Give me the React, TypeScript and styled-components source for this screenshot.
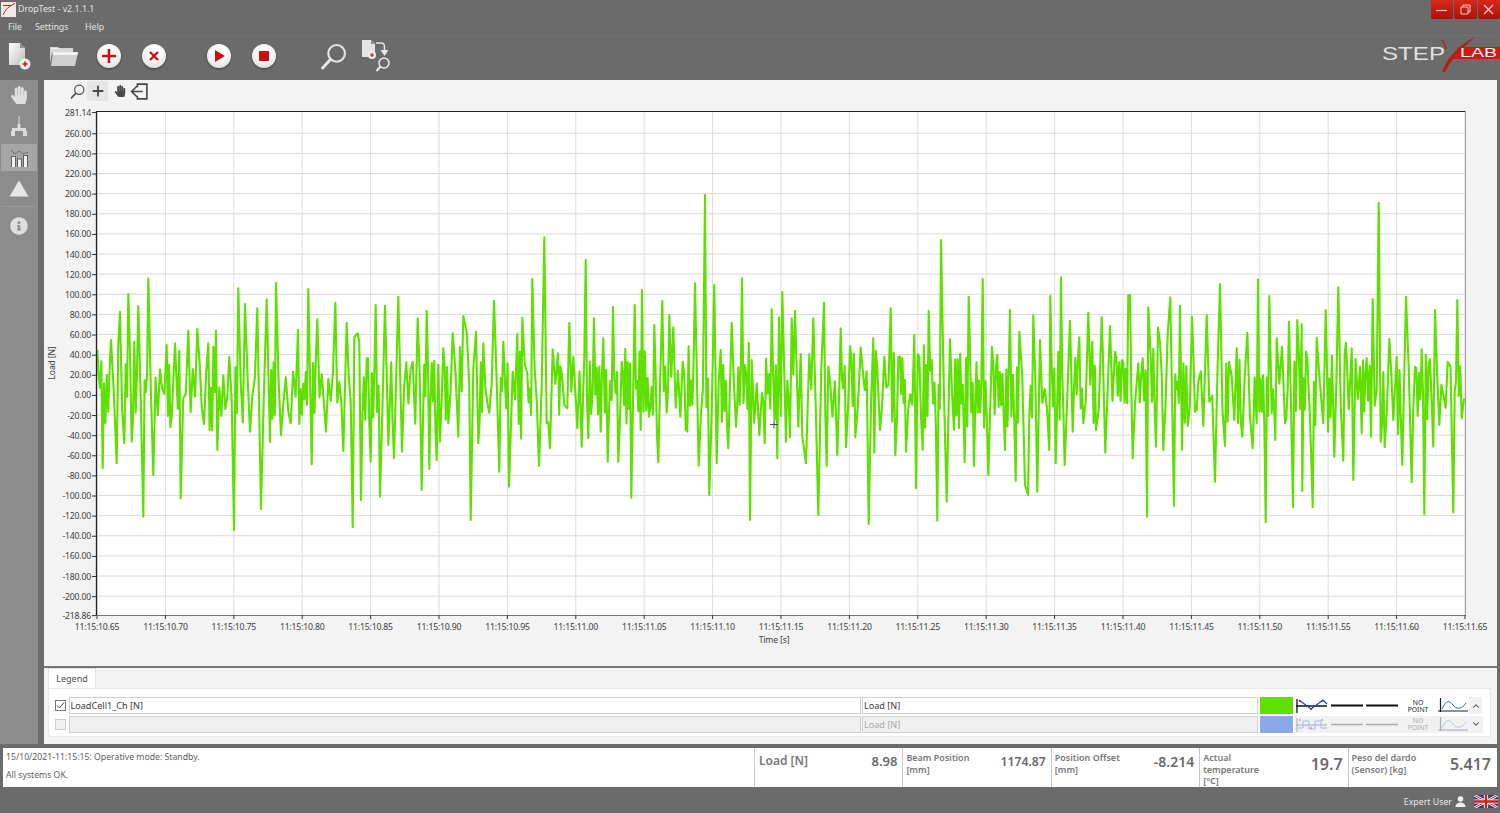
import React, { useMemo } from "react";
import styled, { createGlobalStyle } from "styled-components";
import { FaHandPaper, FaInfoCircle } from "react-icons/fa";
import { Plus, ChevronUp, ChevronDown } from "lucide-react";

const FONT = `"Noto Sans", "Open Sans", "Liberation Sans", sans-serif`;

const Global = createGlobalStyle`
  html, body { margin: 0; padding: 0; background: #6b6b6b; overflow: hidden; }
  * { box-sizing: border-box; }
`;

const Page = styled.div`
  width: 1500px; height: 813px; display: flex; flex-direction: column;
  background: #6b6b6b; font-family: ${FONT}; color: #555; overflow: hidden;
`;
const TitleRow = styled.div`
  height: 18px; display: flex; align-items: center; padding-left: 1px; gap: 2px;
  color: #e4e4e4; font-size: 8.8px;
`;
const AppIcon = styled.svg`width: 15px; height: 15px; flex: none;`;
const WindowButtons = styled.div`
  margin-left: auto; display: flex; gap: 1px; height: 19px; align-self: flex-start;
`;
const WinBtn = styled.div`
  width: 22.5px; height: 19px; display: flex; align-items: center; justify-content: center;
  background: linear-gradient(#d9291a, #a8120a); border-radius: 0 0 2px 2px;
`;
const MenuRow = styled.div`
  height: 18px; display: flex; align-items: center; padding-left: 8px; color: #e4e4e4; font-size: 8.8px;
  border-bottom: 1px solid #727272;
`;
const MenuItem = styled.span<{ $w: number }>`width: ${(p) => p.$w}px;`;
const Toolbar = styled.div`height: 44px; display: flex; align-items: center; padding-bottom: 4px;`;
const ToolGroup = styled.div<{ $gap: number; $left: number }>`
  display: flex; align-items: center; gap: ${(p) => p.$gap}px; margin-left: ${(p) => p.$left}px;
`;
const ToolButton = styled.div`
  width: 38px; height: 38px; display: flex; align-items: center; justify-content: center;
`;
const RoundButton = styled.div`
  width: 24px; height: 24px; border-radius: 50%; display: flex; align-items: center; justify-content: center;
  background: radial-gradient(circle at 50% 35%, #ffffff 30%, #d4d4d4 100%);
  box-shadow: 0 1px 2px rgba(0,0,0,.45);
`;
const Logo = styled.svg`margin-left: auto; width: 120px; height: 40px; flex: none;`;
const LogoText = styled.text`font-family: "Liberation Sans", sans-serif;`;

const Body = styled.div`height: 664px; display: flex;`;
const Sidebar = styled.div`
  width: 38px; flex: none; background: #8c8c8c; display: flex; flex-direction: column; gap: 2px; align-items: stretch;
`;
const SideItem = styled.div<{ $active?: boolean; $h: number }>`
  height: ${(p) => p.$h}px; margin: 0 1px; display: flex; align-items: center; justify-content: center;
  background: ${(p) => (p.$active ? "#a6a6a6" : "transparent")};
`;
const SideRule = styled.div`height: 1px; margin: 0 2px; background: #9a9a9a;`;
const Main = styled.div`
  margin-left: 6px; width: 1453px; display: flex; flex-direction: column; background: #f3f3f3;
`;
const ChartPanel = styled.div`
  height: 588px; display: flex; flex-direction: column; border-bottom: 2px solid #757575; flex: none;
`;
const ChartTools = styled.div`
  height: 22px; display: flex; align-items: center; padding-left: 23px; flex: none;
`;
const ChartTool = styled.div<{ $active?: boolean; $w: number }>`
  width: ${(p) => p.$w}px; height: 20px; display: flex; align-items: center; justify-content: center;
  background: ${(p) => (p.$active ? "#e6e6e6" : "transparent")};
  color: #4a4a4a;
`;
const ChartSvg = styled.svg`display: block; flex: none;`;
const AxisLabel = styled.text`font-family: ${FONT}; font-size: 8.7px; letter-spacing: -0.2px; fill: #3c3c3c;`;

const LegendPanel = styled.div`flex: 1; min-height: 0; padding: 0 6px 7px 4px; display: flex; flex-direction: column;`;
const Tab = styled.div`
  width: 48px; height: 20px; background: #fff; border: 1px solid #e2e2e2; border-bottom: none; flex: none;
  display: flex; align-items: center; justify-content: center; font-size: 9px; color: #4a4a4a;
`;
const LegendBox = styled.div`
  flex: 1; background: #fff; border: 1px solid #e8e8e8; padding: 8px 7px 0 6px;
  display: flex; flex-direction: column; gap: 1px;
`;
const LegendRow = styled.div`
  height: 17.5px; display: grid; align-items: center;
  grid-template-columns: 12px 792px 396px 33px 1fr;
  column-gap: 1.5px;
`;
const Check = styled.div<{ $off?: boolean }>`
  width: 11px; height: 11px; border: 1px solid ${(p) => (p.$off ? "#cfcfcf" : "#777")};
  background: ${(p) => (p.$off ? "#f0f0f0" : "#fff")}; display: flex; align-items: center; justify-content: center;
`;
const LegendInput = styled.div<{ $off?: boolean }>`
  height: 17px; border: 1px solid #d0d0d0; padding-left: 1px; display: flex; align-items: center;
  font-size: 9.1px; color: ${(p) => (p.$off ? "#aaa" : "#3c3c3c")};
  background: ${(p) => (p.$off ? "#f0f0f0" : "#fff")};
`;
const Swatch = styled.div<{ $color: string }>`height: 17px; background: ${(p) => p.$color};`;
const TraceCell = styled.div<{ $off?: boolean }>`
  height: 17px; display: flex; align-items: center; padding-left: 2px; background: ${(p) => (p.$off ? "#f1f1f1" : "#fff")};
`;
const NoPoint = styled.div<{ $off?: boolean }>`
  width: 24px; margin-left: 8px; text-align: center; font-size: 6.8px; line-height: 7.2px;
  color: ${(p) => (p.$off ? "#aaa" : "#222")};
`;
const Scroller = styled.div`
  width: 13px; height: 17px; background: #f1f1f1; display: flex; align-items: center; justify-content: center; color: #444;
`;

const Status = styled.div`
  margin: 4px 3px 0; height: 39px; background: #fff; display: flex; flex: none;
`;
const Message = styled.div`
  width: 751px; padding: 4px 0 0 3px; font-size: 8.7px; color: #606060; display: flex; flex-direction: column; gap: 7px; line-height: 11px;
`;
const Reading = styled.div`
  width: 148.4px; flex: none; border-left: 1px solid #c8c8c8; padding: 4px 5px 0 3px; display: flex; justify-content: space-between;
`;
const ReadingLabel = styled.div<{ $big?: boolean }>`
  font-size: ${(p) => (p.$big ? 12 : 9)}px; line-height: ${(p) => (p.$big ? 17 : 11.500)}px; font-weight: 600; color: #777;
  padding-left: ${(p) => (p.$big ? 1 : 0)}px;
`;
const ReadingValue = styled.div<{ $size: number }>`
  font-size: ${(p) => p.$size}px; line-height: ${(p) => (p.$size > 15 ? 24 : 19)}px; font-weight: 600; color: #6a6a6a;
`;
const BottomBar = styled.div`
  flex: 1; display: flex; justify-content: flex-end; align-items: center; gap: 8px; padding: 3px 2px 0 0;
  font-size: 8.8px; color: #e8e8e8;
`;
const UserBlock = styled.div`display: flex; align-items: center; gap: 3px;`;

/* --------- waveform data, transcribed spike by spike --------- */
const SEGS: { ox: number; oy: number; p: number[] }[] = [
  { ox: 90, oy: 280, p: [22,210,38,565,42,310,63,180,80,550,90,95,103,490,115,42,125,485,145,78,160,710,175,-5,190,585,230,195,245,410,255,190,272,655,295,152,322,146,342,432,355,190,378,152,382,510,418,230,432,750,445,25,465,72,480,455,502,85,513,687,530,58,540,485,558,8,573,465,602,430,624,150,628,432,655,27,665,553,682,118,708,455,736,68,760,513,770,128,788,742,793,172,803,160,813,660,830,235,842,545,857,75,870,650,885,77,895,495,912,535,925,50,936,515,968,245,983,115,995,630,1010,92,1018,567,1040,540] },
  { ox: 440, oy: 230, p: [0,635,10,355,25,580,38,310,55,620,60,350,70,258,80,305,92,870,108,305,115,640,130,340,148,548,162,212,178,725,190,335,207,770,218,425,232,312,236,582,247,263,262,430,277,147,297,708,313,22,320,580,330,655,338,358,354,370,365,430,382,535,388,278,400,380,412,595,425,650,437,90,445,625,462,265,490,325,503,695,519,230,535,695,545,395,574,803,584,225,602,600,606,180,627,560,643,285,655,697,667,213,680,548,688,255,700,292,728,395,742,605,765,160,776,707,795,-105,808,795,823,165,830,700,842,360,865,655,875,278,888,590,906,145,915,405,930,870,935,390,958,615,974,640,995,238,1012,685,1017,262,1027,186,1038,635] },
  { ox: 790, oy: 230, p: [0,622,5,265,15,242,25,590,32,372,37,620,48,700,58,372,70,265,85,855,102,218,110,708,120,450,142,675,152,295,168,652,180,348,196,622,212,352,236,882,250,325,253,668,262,415,270,600,302,235,316,675,330,380,348,665,373,315,378,775,388,380,398,660,416,242,425,390,442,872,453,30,470,815,480,327,492,600,518,465,524,697,536,200,552,708,578,147,595,735,606,350,622,375,645,660,660,240,677,752,688,305,705,765,714,795,730,255,742,785,750,330,778,660,781,198,797,700,813,142,824,705,840,272,848,605,868,322,880,580,895,248,907,335,918,600,935,262,946,668,960,288,975,365,1000,395,1015,195] },
  { ox: 1130, oy: 190, p: [0,315,8,805,15,640,25,520,38,505,51,980,55,352,62,500,78,770,84,412,90,458,100,780,113,432,121,322,132,948,150,347,156,780,173,708,186,380,195,665,205,575,220,708,230,375,238,635,255,875,270,283,285,768,297,515,313,690,320,475,337,740,352,428,368,775,380,700,384,268,407,997,418,318,436,750,440,445,456,470,465,700,477,395,489,952,502,390,515,403,517,903,532,505,548,952,560,443,580,700,587,360,613,800,625,292,640,812,648,458,665,475,670,870,690,530,695,730,710,505,723,740,728,327,746,38,752,755,764,772,778,447,790,690,800,500,817,825,828,320,845,877,855,530,883,973,900,508,910,770,915,360,928,705,953,515,970,967,982,330,995,685,1002,625] },
];

function buildWave(): string {
  let seed = 20211015;
  const rnd = () => {
    seed = (seed + 0x6d2b79f5) | 0;
    let t = Math.imul(seed ^ (seed >>> 15), 1 | seed);
    t = (t + Math.imul(t ^ (t >>> 7), 61 | t)) ^ t;
    return ((t ^ (t >>> 14)) >>> 0) / 4294967296;
  };
  const anchors: [number, number][] = [];
  SEGS.forEach((s) => {
    const list: [number, number][] = [];
    for (let i = 0; i < s.p.length; i += 2) list.push([s.ox + s.p[i] / 3, s.oy + s.p[i + 1] / 3]);
    list.sort((a, b) => a[0] - b[0]);
    anchors.push(...list);
  });
  const out: [number, number][] = [];
  let sign = 1;
  anchors.forEach((a, i) => {
    out.push(a);
    const b = anchors[i + 1];
    if (!b) return;
    const dx = b[0] - a[0];
    const dense = rnd() < 0.55;
    const n = Math.floor(dx / (dense ? 1.2 : 2));
    for (let k = 1; k < n; k++) {
      sign = -sign;
      const amp = dense ? 6 + rnd() * 32 : 2 + rnd() * 22;
      const centre = 390 + (rnd() - 0.5) * 24;
      out.push([a[0] + (dx * k) / n, centre + sign * amp]);
    }
  });
  return out.map((p, i) => `${i ? "L" : "M"}${p[0].toFixed(1)} ${p[1].toFixed(1)}`).join("");
}

const PLOT = { l: 97, r: 1465, t: 112, b: 615 };
const yOf = (v: number) => 394.9 - v * 1.0062;
const yTicks = Array.from({ length: 24 }, (_, i) => 260 - i * 20);
const xTicks = Array.from({ length: 21 }, (_, i) => i);
const timeLabel = (i: number) => {
  const h = 65 + i * 5;
  const sec = h >= 100 ? 11 : 10;
  const frac = h % 100;
  return `11:15:${sec}.${String(frac).padStart(2, "0")}`;
};

function Chart() {
  const wave = useMemo(buildWave, []);
  return (
    <ChartSvg width={1453} height={562} viewBox="44 102 1453 562">
      <rect x={PLOT.l} y={PLOT.t} width={PLOT.r - PLOT.l} height={PLOT.b - PLOT.t} fill="#fff" />
      {yTicks.map((v) => (
        <line key={v} x1={PLOT.l} x2={PLOT.r} y1={yOf(v)} y2={yOf(v)} stroke="#d9d9d9" strokeWidth="1" />
      ))}
      {xTicks.map((i) => (
        <line key={i} x1={PLOT.l + i * 68.4} x2={PLOT.l + i * 68.4} y1={PLOT.t} y2={PLOT.b} stroke="#dcdcdc" strokeWidth="1" />
      ))}
      <path d={wave} fill="none" stroke="#5fe000" strokeWidth="2.100" strokeLinejoin="round" />
      <path d="M770 424.500H778M774 420.500V428.500" stroke="#444" strokeWidth="1" />
      <line x1={96} x2={1466} y1={111.5} y2={111.5} stroke="#222" />
      <line x1={96.5} x2={96.5} y1={111} y2={615} stroke="#222" strokeWidth="1.3" />
      <line x1={96} x2={1466} y1={615.5} y2={615.5} stroke="#777" />
      <line x1={1465.5} x2={1465.5} y1={111} y2={616} stroke="#999" />
      {[281.14, ...yTicks, -218.86].map((v) => (
        <g key={v}>
          <line x1={92} x2={96} y1={yOf(v) + 0.5} y2={yOf(v) + 0.5} stroke="#333" />
          <AxisLabel x={91} y={yOf(v) + 3.5} textAnchor="end">{v.toFixed(2)}</AxisLabel>
        </g>
      ))}
      {xTicks.map((i) => (
        <g key={i}>
          <line x1={PLOT.l + i * 68.4} x2={PLOT.l + i * 68.4} y1={615} y2={619} stroke="#333" />
          <AxisLabel x={PLOT.l + i * 68.4} y={630} textAnchor="middle">{timeLabel(i)}</AxisLabel>
        </g>
      ))}
      <AxisLabel x={774} y={643} textAnchor="middle">Time [s]</AxisLabel>
      <AxisLabel transform="translate(55 363) rotate(-90)" textAnchor="middle">Load [N]</AxisLabel>
    </ChartSvg>
  );
}

/* --------- icons --------- */
const NewDocIcon = () => (
  <svg width="30" height="30" viewBox="0 0 30 30">
    <defs>
      <linearGradient id="pg" x1="0" y1="0" x2="1" y2="1"><stop offset="0" stopColor="#fff" /><stop offset="1" stopColor="#bdbdbd" /></linearGradient>
    </defs>
    <path d="M5 2h11l5 5v17H5z" fill="url(#pg)" />
    <path d="M16 2v5h5z" fill="#8f8f8f" />
    <circle cx="21" cy="23" r="5.500" fill="#eee" />
    <path d="M18.500 23h5M21 20.500v5" stroke="#c81010" strokeWidth="1.600" />
  </svg>
);
const FolderIcon = () => (
  <svg width="30" height="26" viewBox="0 0 30 26" style={{ marginLeft: -2 }}>
    <path d="M2 4h8l2 2h13v4H4l-2 10z" fill="#d8d8d8" />
    <path d="M4 5.500h21" stroke="#fff" strokeWidth="1" opacity=".7" />
    <path d="M3 23L5 9h25l-3 14z" fill="#cfcfcf" />
    <path d="M5 9h25l-.6 3H4.600z" fill="#f1f1f1" />
  </svg>
);
const Magnifier = ({ s, c, w }: { s: number; c: string; w: number }) => (
  <svg width={s} height={s} viewBox="0 0 26 26">
    <circle cx="16" cy="10" r="8" fill="none" stroke={c} strokeWidth={w} />
    <path d="M10 16L2.500 24" stroke={c} strokeWidth={w + 0.8} strokeLinecap="round" />
  </svg>
);
const DocSearchIcon = () => (
  <svg width="34" height="34" viewBox="0 0 34 34">
    <path d="M3 1h9l4 4v13H3z" fill="#e4e4e4" />
    <path d="M12 1v4h4z" fill="#8f8f8f" />
    <circle cx="13" cy="16" r="4" fill="#eee" />
    <path d="M11 16h4M13 14v4" stroke="#c81010" strokeWidth="1.200" />
    <path d="M17 4h5c3 0 3.500 2 3.500 4v4" fill="none" stroke="#e8e8e8" strokeWidth="1.500" />
    <path d="M21.500 11h8l-4 6z" fill="#e8e8e8" />
    <circle cx="25" cy="24" r="5" fill="none" stroke="#eee" strokeWidth="1.500" />
    <path d="M21.500 27.500L17.500 32" stroke="#eee" strokeWidth="2" />
  </svg>
);
const HandIcon = () => <FaHandPaper size={18} color="#dedede" />;
const NetworkIcon = () => (
  <svg width="20" height="24" viewBox="0 0 20 24">
    <path d="M9.500 1h1v9h-1z" fill="#ddd" />
    <path d="M8.500 9h3v4h-3z" fill="#dcdcdc" />
    <path d="M3 13h14v3H3z" fill="#dcdcdc" />
    <path d="M2 16h4v5H2zM14 16h4v5h-4z" fill="#dcdcdc" />
  </svg>
);
const BarsIcon = () => (
  <svg width="19" height="18" viewBox="0 0 19 18">
    <path d="M1 7h5v11H1zM7 9.500h5V18H7zM13 6h5v12h-5z" fill="#5e5e5e" />
    <path d="M2 8h3v10H2zM8 10.500h3V18H8zM14 7h3v11h-3z" fill="#f2f2f2" />
    <path d="M1 1.500l4 3.500 4-3 4 3 5-2" fill="none" stroke="#4a4a4a" strokeWidth=".9" strokeDasharray="1.600 .8" />
  </svg>
);
const WarnIcon = () => (
  <svg width="20" height="17" viewBox="0 0 20 17"><path d="M10 .5l9.500 16H.5z" fill="#e6e6e6" /></svg>
);
const ExitIcon = () => (
  <svg width="19" height="19" viewBox="0 0 18 18" style={{ flex: "none" }}>
    <path d="M7 5V2h9v14H7v-3" fill="none" stroke="#444" strokeWidth="1.500" />
    <path d="M12 9H2M6.500 4L1.500 9l5 5" fill="none" stroke="#444" strokeWidth="1.500" />
  </svg>
);
const UserIcon = () => (
  <svg width="11" height="11" viewBox="0 0 11 11">
    <circle cx="5.500" cy="3" r="2.800" fill="#eee" />
    <path d="M.5 11c0-3 2-4.500 5-4.500s5 1.500 5 4.500z" fill="#eee" />
  </svg>
);
const Flag = () => (
  <svg width="24" height="13" viewBox="0 0 24 13">
    <rect width="24" height="13" fill="#2a3f8f" />
    <path d="M0 0l24 13M24 0L0 13" stroke="#fff" strokeWidth="2.600" />
    <path d="M0 0l24 13M24 0L0 13" stroke="#d01c1c" strokeWidth="1" />
    <path d="M12 0v13M0 6.500h24" stroke="#fff" strokeWidth="4.200" />
    <path d="M12 0v13M0 6.500h24" stroke="#d01c1c" strokeWidth="2.400" />
  </svg>
);
const Interp = ({ c, alt }: { c: string; alt?: boolean }) => (
  <svg width="32" height="17" viewBox="0 0 32 17">
    <path d="M1 2v14M0 9h31" stroke={alt ? "#aaa" : "#111"} strokeWidth={alt ? 1 : 1.300} fill="none" />
    {alt ? (
      <path d="M2 12h5V5h6v8h6V5h6v7h6" stroke="#a9b9e8" strokeWidth="1" fill="none" />
    ) : (
      <path d="M3 3l12 9 12-9 4 4" stroke={c} strokeWidth="1.200" fill="none" />
    )}
    <circle cx="4" cy="4" r="1" fill={alt ? "#c79ab0" : "#b0104a"} />
    <circle cx="15" cy="12" r="1" fill={alt ? "#c79ab0" : "#b0104a"} />
    <circle cx="26" cy="4" r="1" fill={alt ? "#c79ab0" : "#2840b0"} />
  </svg>
);
const LineSample = ({ c, w, ml }: { c: string; w: number; ml: number }) => (
  <svg width="32" height="5" viewBox="0 0 32 5" style={{ marginLeft: ml }}>
    <rect y={(5 - w) / 2} width="32" height={w} fill={c} />
  </svg>
);
const MiniChart = ({ alt }: { alt?: boolean }) => (
  <svg width="31" height="15" viewBox="0 0 31 15" style={{ marginLeft: 8 }}>
    <path d="M2.500 0v14M0 13h30" stroke={alt ? "#aaa" : "#222"} strokeWidth="1.200" fill="none" />
    <path d="M4 11C8 2 11 2 15 7s9 4 13-2" stroke={alt ? "#b9c5ea" : "#3860c0"} strokeWidth="1" fill="none" />
  </svg>
);

const Row = ({ off, name, unit, color }: { off?: boolean; name: string; unit: string; color: string }) => (
  <LegendRow>
    <Check $off={off}>
      {!off && (
        <svg width="9" height="9" viewBox="0 0 9 9"><path d="M1 4.500l2.500 2.500L8 1.500" fill="none" stroke="#444" strokeWidth="1" /></svg>
      )}
    </Check>
    <LegendInput $off={off}>{name}</LegendInput>
    <LegendInput $off={off}>{unit}</LegendInput>
    <Swatch $color={color} />
    <TraceCell $off={off}>
      <Interp c="#2840b0" alt={off} />
      <LineSample c={off ? "#aaa" : "#111"} w={off ? 1.500 : 2} ml={3} />
      <LineSample c={off ? "#aaa" : "#111"} w={off ? 1.500 : 2} ml={3} />
      <NoPoint $off={off}>NO<br />POINT</NoPoint>
      <MiniChart alt={off} />
      <Scroller>{off ? <ChevronDown size={10} strokeWidth={2.500} /> : <ChevronUp size={10} strokeWidth={2.500} />}</Scroller>
    </TraceCell>
  </LegendRow>
);

export default function App() {
  return (
    <Page>
      <Global />
      <TitleRow>
        <AppIcon viewBox="0 0 15 15">
          <rect width="15" height="15" fill="#f1e9e6" />
          <path d="M2 13C4 8 8 4 14 1.500M2 3.500h8" fill="none" stroke="#c02020" strokeWidth="1" />
        </AppIcon>
        DropTest - v2.1.1.1
        <WindowButtons>
          <WinBtn><svg width="11" height="11" viewBox="0 0 11 11"><path d="M0 6.500h11" stroke="#f3c9c4" strokeWidth="1.200" /></svg></WinBtn>
          <WinBtn><svg width="11" height="11" viewBox="0 0 11 11"><path d="M3 3V1h7v7H8M1 3h7v7H1z" fill="none" stroke="#f3c9c4" /></svg></WinBtn>
          <WinBtn><svg width="11" height="11" viewBox="0 0 11 11"><path d="M1 1l9 9M10 1l-9 9" stroke="#f3d9d6" strokeWidth="1.100" /></svg></WinBtn>
        </WindowButtons>
      </TitleRow>
      <MenuRow>
        <MenuItem $w={27}>File</MenuItem>
        <MenuItem $w={50}>Settings</MenuItem>
        <MenuItem $w={30}>Help</MenuItem>
      </MenuRow>
      <Toolbar>
        <ToolGroup $gap={7} $left={0}>
          <ToolButton><NewDocIcon /></ToolButton>
          <ToolButton><FolderIcon /></ToolButton>
          <ToolButton>
            <RoundButton><svg width="16" height="16" viewBox="0 0 16 16"><path d="M8 1v14M1 8h14" stroke="#cc1010" strokeWidth="2.600" /></svg></RoundButton>
          </ToolButton>
          <ToolButton>
            <RoundButton><svg width="12" height="12" viewBox="0 0 12 12"><path d="M2 2l8 8M10 2l-8 8" stroke="#cc1010" strokeWidth="2.400" /></svg></RoundButton>
          </ToolButton>
        </ToolGroup>
        <ToolGroup $gap={7} $left={27}>
          <ToolButton>
            <RoundButton><svg width="14" height="14" viewBox="0 0 14 14"><path d="M3 1l10 6-10 6z" fill="#cc1010" /></svg></RoundButton>
          </ToolButton>
          <ToolButton>
            <RoundButton><svg width="10" height="10" viewBox="0 0 10 10"><rect width="10" height="10" fill="#cc1010" /></svg></RoundButton>
          </ToolButton>
        </ToolGroup>
        <ToolGroup $gap={5} $left={31}>
          <ToolButton><Magnifier s={27} c="#e6e6e6" w={2} /></ToolButton>
          <ToolButton><DocSearchIcon /></ToolButton>
        </ToolGroup>
        <Logo viewBox="0 0 120 40">
          <LogoText x="2" y="24" fontSize="19" fill="#e2e2e2" textLength="63" lengthAdjust="spacingAndGlyphs">STEP</LogoText>
          <path d="M72 23L78 11H120V23z" fill="#cc1a10" />
          <path d="M62 4c2 3 4 6 4 9" stroke="#a82020" strokeWidth="1.200" fill="none" />
          <path d="M62 36C66 24 78 9 95 1C82 12 72 22 65 36z" fill="#b81c14" />
          <LogoText x="80" y="21" fontSize="12" fill="#f3f3f3" textLength="37" lengthAdjust="spacingAndGlyphs">LAB</LogoText>
        </Logo>
      </Toolbar>
      <Body>
        <Sidebar>
          <SideItem $h={30}><HandIcon /></SideItem>
          <SideItem $h={30}><NetworkIcon /></SideItem>
          <SideItem $h={27} $active><BarsIcon /></SideItem>
          <SideItem $h={31}><WarnIcon /></SideItem>
          <SideRule />
          <SideItem $h={34}><FaInfoCircle size={18} color="#dedede" /></SideItem>
        </Sidebar>
        <Main>
          <ChartPanel>
            <ChartTools>
              <ChartTool $w={20}><Magnifier s={15} c="#4a4a4a" w={2} /></ChartTool>
              <ChartTool $w={21} $active><Plus size={16} strokeWidth={2.800} /></ChartTool>
              <ChartTool $w={24}><FaHandPaper size={12} /></ChartTool>
              <ChartTool $w={14}><ExitIcon /></ChartTool>
            </ChartTools>
            <Chart />
          </ChartPanel>
          <LegendPanel>
            <Tab>Legend</Tab>
            <LegendBox>
              <Row name="LoadCell1_Ch [N]" unit="Load [N]" color="#5fe000" />
              <Row off name="" unit="Load [N]" color="#8ba8e8" />
            </LegendBox>
          </LegendPanel>
        </Main>
      </Body>
      <Status>
        <Message>
          <span>15/10/2021-11:15:15: Operative mode: Standby.</span>
          <span>All systems OK.</span>
        </Message>
        <Reading>
          <ReadingLabel $big>Load [N]</ReadingLabel>
          <ReadingValue $size={13}>8.98</ReadingValue>
        </Reading>
        <Reading>
          <ReadingLabel>Beam Position<br />[mm]</ReadingLabel>
          <ReadingValue $size={12.200}>1174.87</ReadingValue>
        </Reading>
        <Reading>
          <ReadingLabel>Position Offset<br />[mm]</ReadingLabel>
          <ReadingValue $size={14}>-8.214</ReadingValue>
        </Reading>
        <Reading>
          <ReadingLabel>Actual<br />temperature<br />[°C]</ReadingLabel>
          <ReadingValue $size={16}>19.7</ReadingValue>
        </Reading>
        <Reading>
          <ReadingLabel>Peso del dardo<br />(Sensor) [kg]</ReadingLabel>
          <ReadingValue $size={16}>5.417</ReadingValue>
        </Reading>
      </Status>
      <BottomBar>
        <UserBlock>Expert User <UserIcon /></UserBlock>
        <Flag />
      </BottomBar>
    </Page>
  );
}
